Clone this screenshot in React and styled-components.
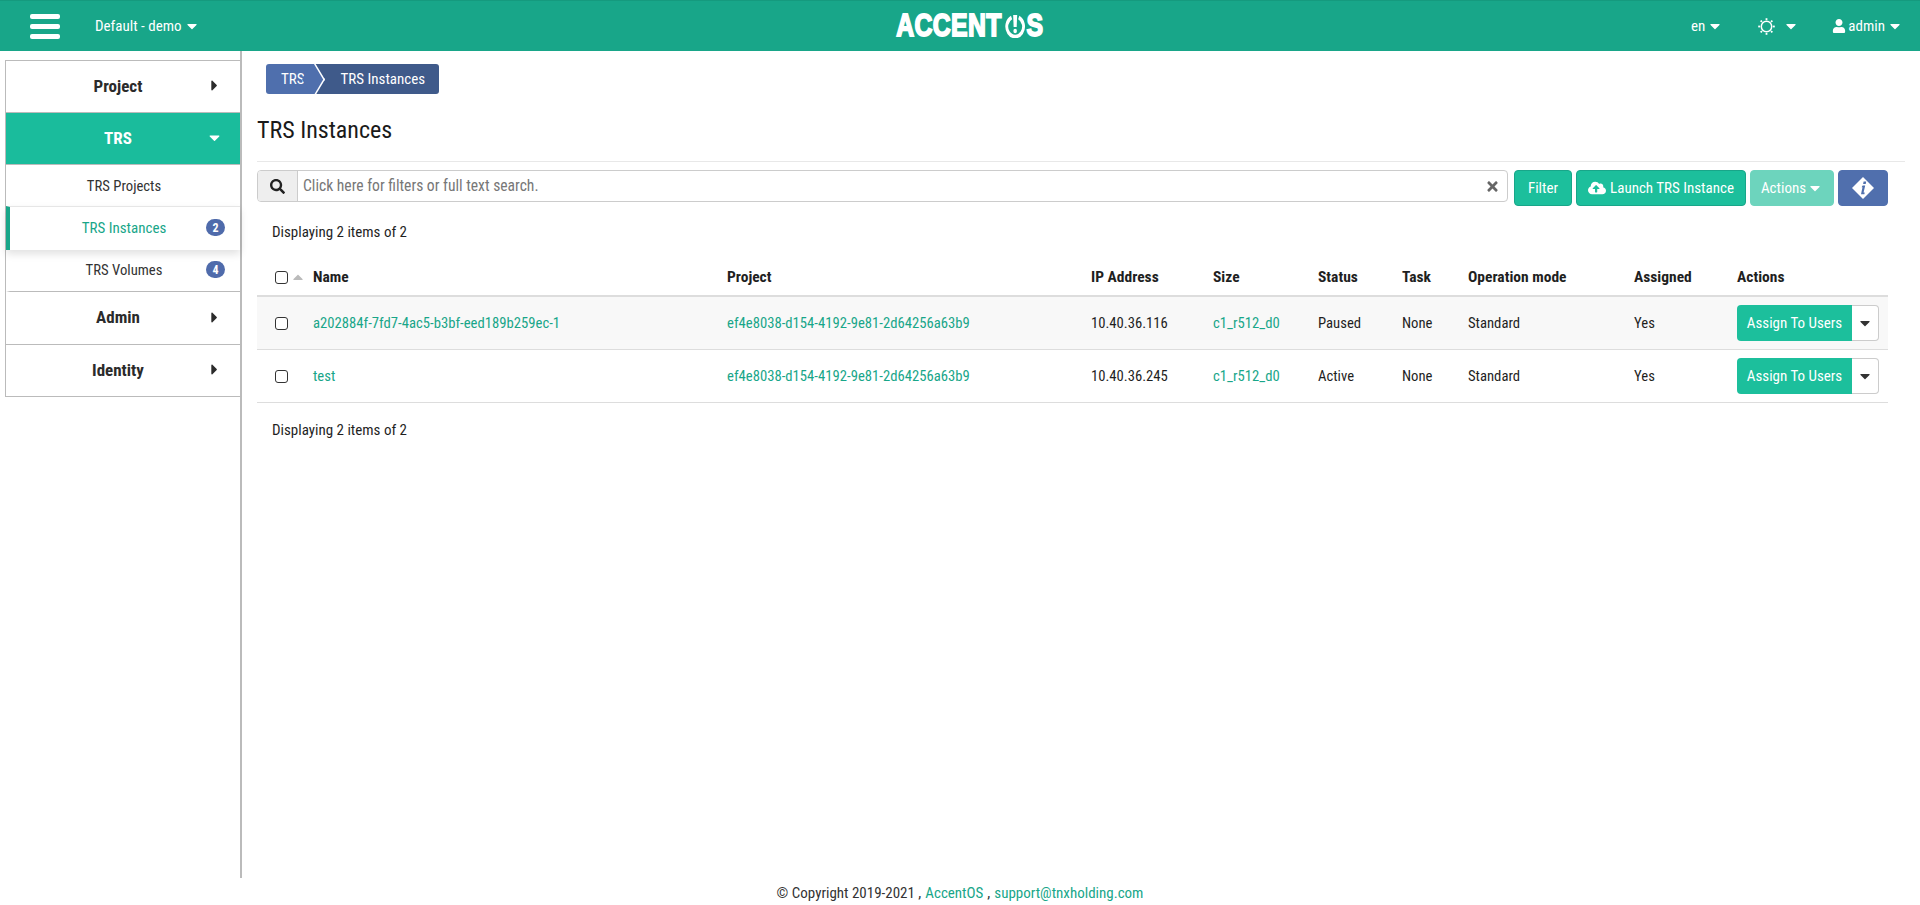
import React from "react";
import styled, { createGlobalStyle } from "styled-components";
import { FaSearch, FaTimes, FaCloudUploadAlt, FaUser, FaCaretRight, FaCaretDown, FaCaretUp } from "react-icons/fa";

const GlobalStyle = createGlobalStyle`
  html, body {
    margin: 0;
    padding: 0;
    height: 100%;
    background: #fff;
  }
  body {
    font-family: "Liberation Sans Narrow", "Roboto Condensed", "Liberation Sans", sans-serif;
    font-size: 14px;
    color: #1f1f1f;
  }
  * {
    box-sizing: border-box;
  }
`;

const Page = styled.div`
  width: 100%;
  height: 905px;
  display: flex;
  flex-direction: column;
  overflow: hidden;
`;

const Header = styled.header`
  height: 51px;
  flex: none;
  background: #18a689;
  border-top: 1px solid #159a7e;
  color: #fff;
  display: grid;
  grid-template-columns: 1fr auto 1fr;
  align-items: center;
  padding: 0 17px 0 30px;
`;

const HeaderLeft = styled.div`
  display: flex;
  align-items: center;
  gap: 35px;
`;

const HeaderRight = styled.div`
  display: flex;
  align-items: center;
  justify-content: flex-end;
  font-size: 15px;
`;

const Burger = styled.div`
  width: 30px;
  display: flex;
  flex-direction: column;
  gap: 5px;
  span {
    height: 5px;
    border-radius: 2px;
    background: #fff;
  }
`;

const Caret = styled(FaCaretDown)`
  font-size: ${(p) => p.$size || 16}px;
  color: ${(p) => p.$color || "inherit"};
  flex: none;
`;

const HeaderItem = styled.div`
  display: flex;
  align-items: center;
  gap: ${(p) => p.$gap || 2}px;
  font-size: 15px;
  margin-left: ${(p) => p.$left || 0}px;
`;

const Logo = styled.div`
  display: flex;
  align-items: center;
  margin-left: 7px;
  font-family: "Liberation Sans", sans-serif;
  font-weight: 700;
  font-size: 31px;
  letter-spacing: 0.4px;
  color: #fff;
  -webkit-text-stroke: 1.8px #fff;
  transform: scaleX(0.8);
  svg {
    margin: 0 1px 0 3px;
  }
`;

const Body = styled.div`
  flex: none;
  height: 827px;
  display: flex;
`;

const Sidebar = styled.aside`
  width: 242px;
  flex: none;
  border-right: 2px solid #bbb;
  padding: 9px 0 0 5px;
`;

const Nav = styled.nav`
  border: 1px solid #bbb;
  border-right: none;
`;

const NavGroup = styled.div`
  height: ${(p) => p.$h || 52}px;
  display: flex;
  align-items: center;
  justify-content: center;
  position: relative;
  font-size: 17px;
  font-weight: 700;
  color: ${(p) => (p.$active ? "#fff" : "#2b2b2b")};
  background: ${(p) => (p.$active ? "#1abc9c" : "#fff")};
  border-bottom: 1px solid #bbb;
  padding: 0 10px 2px 0;
  &:last-child {
    border-bottom: none;
    height: 51px;
  }
  svg {
    position: absolute;
    right: 17px;
    font-size: 17px;
  }
`;

const NavItem = styled.div`
  height: ${(p) => p.$h}px;
  display: flex;
  align-items: center;
  justify-content: center;
  position: relative;
  font-size: ${(p) => (p.$active ? 15 : 14.7)}px;
  padding: 0 2px ${(p) => (p.$active || p.$last ? 2 : 0)}px 0;
  color: ${(p) => (p.$active ? "#18a689" : "#333")};
  border-left: 4px solid ${(p) => (p.$active ? "#18a689" : "transparent")};
  box-shadow: ${(p) => (p.$active ? "0 4px 8px rgba(0,0,0,0.12)" : "none")};
  border-top: ${(p) => (p.$active ? "1px solid #e6e6e6" : "none")};
  border-bottom: ${(p) => (p.$last ? "1px solid #bbb" : "none")};
`;

const Badge = styled.span`
  position: absolute;
  right: 15px;
  width: 19px;
  height: 17px;
  border-radius: 9px;
  background: #4f6bab;
  color: #fff;
  font-size: 12px;
  font-weight: 700;
  display: flex;
  align-items: center;
  justify-content: center;
`;

const Main = styled.main`
  flex: 1;
  min-width: 0;
  padding: 0 15px;
`;

const Crumbs = styled.div`
  display: inline-flex;
  margin: 13px 0 0 9px;
  height: 30px;
  color: #fff;
  font-size: 15px;
  border-radius: 3px;
  overflow: hidden;
`;

const Crumb = styled.div`
  display: flex;
  align-items: center;
  background: ${(p) => (p.$current ? "#3f5a8a" : "#4f6fad")};
  padding: ${(p) => (p.$current ? "0 14px 0 25px" : "0 11px 0 15px")};
  position: relative;
  &::after {
    content: "";
    display: ${(p) => (p.$current ? "none" : "block")};
    position: absolute;
    right: -11px;
    top: 2px;
    width: 25px;
    height: 25px;
    background: #4f6fad;
    border-top: 2px solid #fff;
    border-right: 2px solid #fff;
    transform: scaleX(0.6) rotate(45deg);
    z-index: 1;
  }
`;

const Title = styled.h1`
  margin: 19px 0 0;
  font-size: 24px;
  line-height: 34px;
  font-weight: 400;
  color: #1a1a1a;
  padding-bottom: 14px;
  border-bottom: 1px solid #e8e8e8;
`;

const Inner = styled.div`
  padding-right: 17px;
`;

const Toolbar = styled.div`
  display: flex;
  gap: 4px;
  margin-top: 8px;
  align-items: flex-start;
`;

const SearchBox = styled.div`
  flex: 1;
  height: 32px;
  display: flex;
  border: 1px solid #ccc;
  border-radius: 4px;
  margin-right: 2px;
  overflow: hidden;
  align-items: center;
`;

const SearchAddon = styled.div`
  width: 40px;
  height: 100%;
  background: #eee;
  border-right: 1px solid #ccc;
  display: flex;
  align-items: center;
  justify-content: center;
  color: #222;
  font-size: 15px;
`;

const SearchText = styled.div`
  flex: 1;
  padding-left: 5px;
  color: #777;
  font-size: 15.6px;
`;

const ClearIcon = styled(FaTimes)`
  color: #666;
  font-size: 15px;
  margin-right: 7px;
`;

const Btn = styled.button`
  height: 36px;
  font-family: inherit;
  font-size: 15px;
  color: #fff;
  background: ${(p) => p.$bg || "#1cbf9c"};
  border: 1px solid ${(p) => p.$border || "#18a689"};
  border-radius: 4px;
  display: flex;
  align-items: center;
  justify-content: center;
  gap: ${(p) => p.$gap || 4}px;
  width: ${(p) => p.$w}px;
  padding: 0;
  flex: none;
`;

const CountLine = styled.div`
  font-size: 15px;
  padding-left: 15px;
  margin-top: ${(p) => p.$top}px;
  line-height: 20px;
`;

const cols = "56px 414px 364px 122px 105px 84px 66px 166px 103px 1fr";

const Row = styled.div`
  display: grid;
  grid-template-columns: ${cols};
  align-items: ${(p) => (p.$head ? "end" : "center")};
  height: ${(p) => p.$h}px;
  font-size: ${(p) => (p.$head ? 15.5 : 14.7)}px;
  background: ${(p) => (p.$shaded ? "#f8f8f8" : "transparent")};
  border-bottom: ${(p) => (p.$head ? "2px solid #ddd" : "1px solid #ddd")};
  font-weight: ${(p) => (p.$head ? 700 : 400)};
  padding-bottom: ${(p) => (p.$head ? 9 : 0)}px;
`;

const CheckCell = styled.div`
  display: flex;
  align-items: center;
  padding: 0 0 ${(p) => (p.$head ? 1 : 0)}px 18px;
  gap: 2px;
  color: #bbb;
`;

const Check = styled.input.attrs({ type: "checkbox" })`
  appearance: none;
  width: 13px;
  height: 13px;
  margin: 0;
  border: 1.5px solid #333;
  border-radius: 3px;
  background: #fff;
`;

const Link = styled.a`
  color: #18a689;
  text-decoration: none;
`;

const SplitBtn = styled.div`
  display: flex;
  height: 36px;
  width: 142px;
`;

const AssignBtn = styled.button`
  flex: 1;
  font-family: inherit;
  font-size: 15px;
  color: #fff;
  background: #1cbf9c;
  border: none;
  border-radius: 4px 0 0 4px;
  padding: 0;
`;

const CaretBtn = styled.button`
  width: 27px;
  background: #fff;
  border: 1px solid #ccc;
  border-left: none;
  border-radius: 0 4px 4px 0;
  display: flex;
  align-items: center;
  justify-content: center;
  color: #333;
  padding: 0;
`;

const Footer = styled.footer`
  flex: 1;
  display: flex;
  align-items: center;
  justify-content: center;
  gap: 4px;
  font-size: 15px;
  color: #333;
  padding-top: 3px;
`;

function LogoMark() {
  return (
    <svg width="27" height="24" viewBox="0 0 27 24" preserveAspectRatio="none">
      <path d="M9 3.5a10.5 10 0 1 0 9 0" fill="none" stroke="#fff" strokeWidth="3.6" />
      <path d="M11 1h5l-.6 12h-3.8z" fill="#fff" />
      <circle cx="13.5" cy="17" r="2.2" fill="#fff" />
    </svg>
  );
}

function InfoMark() {
  return (
    <svg width="24" height="24" viewBox="0 0 24 24">
      <polygon points="12,1 23,12 12,23 1,12" fill="#fff" />
      <path d="M12.6 5.6h2.6l-.5 2.4h-2.6zM11.6 9.6h2.6l-1.6 7h1.1l-.3 1.6h-3.4l1.5-7h-.9z" fill="#4f6fad" />
    </svg>
  );
}

function SunMark() {
  const rays = [0, 45, 90, 135, 180, 225, 270, 315];
  return (
    <svg width="17" height="17" viewBox="0 0 17 17">
      <circle cx="8.5" cy="8.5" r="5.2" fill="none" stroke="#fff" strokeWidth="1.5" />
      {rays.map((deg) => (
        <rect key={deg} x="7.6" y="0.2" width="1.8" height="1.9" fill="#fff" transform={`rotate(${deg} 8.5 8.5)`} />
      ))}
    </svg>
  );
}

const instances = [
  { name: "a202884f-7fd7-4ac5-b3bf-eed189b259ec-1", ip: "10.40.36.116", status: "Paused", shaded: true },
  { name: "test", ip: "10.40.36.245", status: "Active" },
];

export default function App() {
  return (
    <Page>
      <GlobalStyle />
      <Header>
        <HeaderLeft>
          <Burger><span /><span /><span /></Burger>
          <HeaderItem>Default - demo <Caret /></HeaderItem>
        </HeaderLeft>
        <Logo>ACCENT<LogoMark />S</Logo>
        <HeaderRight>
          <HeaderItem>en <Caret /></HeaderItem>
          <HeaderItem $left={35} $gap={8}><SunMark /> <Caret /></HeaderItem>
          <HeaderItem $left={33} $gap={2}><FaUser size={14} /> admin <Caret /></HeaderItem>
        </HeaderRight>
      </Header>
      <Body>
        <Sidebar>
          <Nav>
            <NavGroup>Project <FaCaretRight /></NavGroup>
            <NavGroup $active>TRS <FaCaretDown /></NavGroup>
            <NavItem $h={41}>TRS Projects</NavItem>
            <NavItem $h={44} $active>TRS Instances <Badge>2</Badge></NavItem>
            <NavItem $h={42} $last>TRS Volumes <Badge>4</Badge></NavItem>
            <NavGroup $h={53}>Admin <FaCaretRight /></NavGroup>
            <NavGroup>Identity <FaCaretRight /></NavGroup>
          </Nav>
        </Sidebar>
        <Main>
          <Crumbs>
            <Crumb>TRS</Crumb>
            <Crumb $current>TRS Instances</Crumb>
          </Crumbs>
          <Title>TRS Instances</Title>
          <Inner>
            <Toolbar>
              <SearchBox>
                <SearchAddon><FaSearch /></SearchAddon>
                <SearchText>Click here for filters or full text search.</SearchText>
                <ClearIcon />
              </SearchBox>
              <Btn $w={58}>Filter</Btn>
              <Btn $w={170}><FaCloudUploadAlt size={18} /> Launch TRS Instance</Btn>
              <Btn $w={84} $gap={1} $bg="#6dd4bd" $border="#6dd4bd">Actions <Caret /></Btn>
              <Btn $w={50} $bg="#506fad" $border="#506fad"><InfoMark /></Btn>
            </Toolbar>
            <CountLine $top={16}>Displaying 2 items of 2</CountLine>
            <Row $head $h={55}>
              <CheckCell $head><Check /><FaCaretUp size={16} /></CheckCell>
              <div>Name</div>
              <div>Project</div>
              <div>IP Address</div>
              <div>Size</div>
              <div>Status</div>
              <div>Task</div>
              <div>Operation mode</div>
              <div>Assigned</div>
              <div>Actions</div>
            </Row>
            {instances.map((item) => (
              <Row key={item.name} $h={53} $shaded={item.shaded}>
                <CheckCell><Check /></CheckCell>
                <div><Link>{item.name}</Link></div>
                <div><Link>ef4e8038-d154-4192-9e81-2d64256a63b9</Link></div>
                <div>{item.ip}</div>
                <div><Link>c1_r512_d0</Link></div>
                <div>{item.status}</div>
                <div>None</div>
                <div>Standard</div>
                <div>Yes</div>
                <SplitBtn>
                  <AssignBtn>Assign To Users</AssignBtn>
                  <CaretBtn><Caret /></CaretBtn>
                </SplitBtn>
              </Row>
            ))}
            <CountLine $top={17}>Displaying 2 items of 2</CountLine>
          </Inner>
        </Main>
      </Body>
      <Footer>
        © Copyright 2019-2021 , <Link>AccentOS</Link> , <Link>support@tnxholding.com</Link>
      </Footer>
    </Page>
  );
}
